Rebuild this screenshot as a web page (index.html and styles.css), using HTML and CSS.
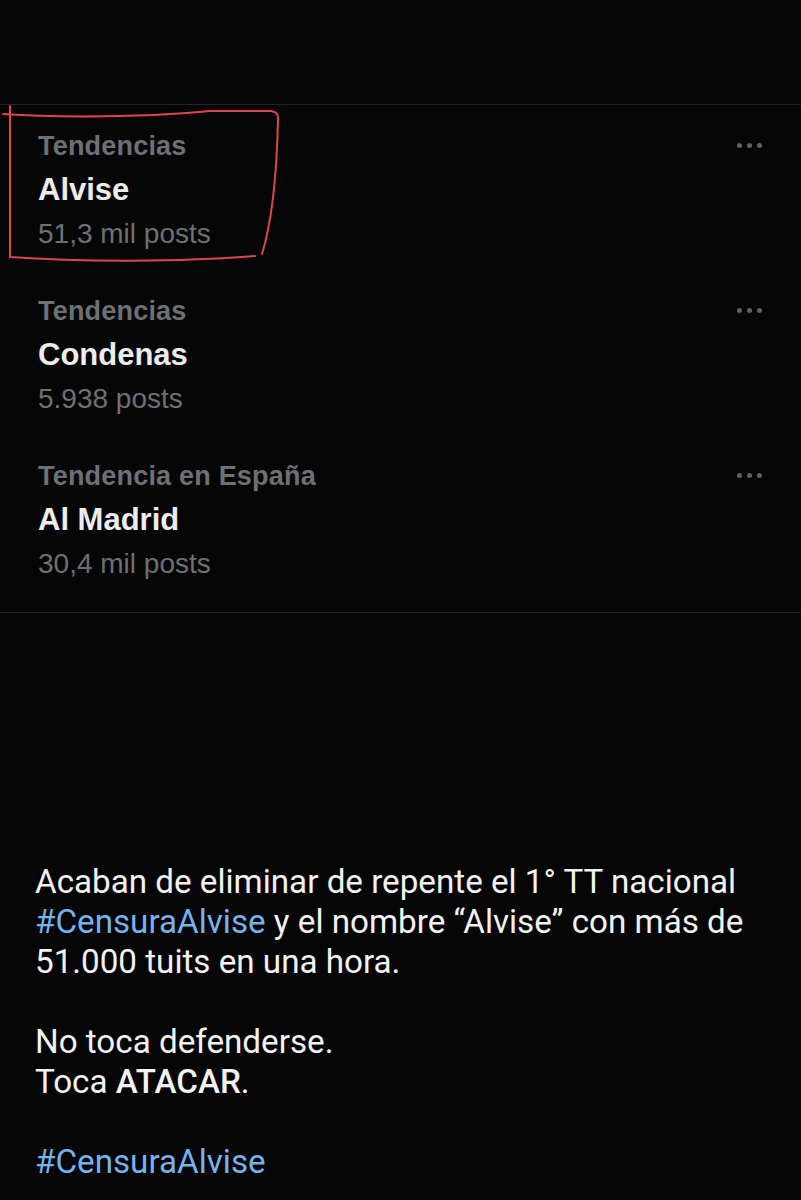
FILE: index.html
```html
<!DOCTYPE html>
<html lang="es">
<head>
<meta charset="utf-8">
<title>Tendencias</title>
<link rel="stylesheet" href="styles.css">
</head>
<body>
<div class="page">
  <div class="top-space"></div>
  <section class="trends">
    <div class="trend">
      <div class="trend-text">
        <div class="label">Tendencias</div>
        <div class="title">Alvise</div>
        <div class="count">51,3 mil posts</div>
      </div>
      <div class="more"><span></span><span></span><span></span></div>
      <svg class="mark" width="290" height="160" viewBox="0 0 290 160">
        <path d="M3 9 C 60 13, 150 12, 210 6 L 271 6 Q 279 7 278 15 C 277 60, 274 110, 262 149" />
        <path d="M10 1 L 10 152 C 80 157, 180 157, 255 151" />
      </svg>
    </div>
    <div class="trend">
      <div class="trend-text">
        <div class="label">Tendencias</div>
        <div class="title">Condenas</div>
        <div class="count">5.938 posts</div>
      </div>
      <div class="more"><span></span><span></span><span></span></div>
    </div>
    <div class="trend">
      <div class="trend-text">
        <div class="label">Tendencia en España</div>
        <div class="title">Al Madrid</div>
        <div class="count">30,4 mil posts</div>
      </div>
      <div class="more"><span></span><span></span><span></span></div>
    </div>
  </section>
  <section class="post">
    <p>Acaban de eliminar de repente el 1° TT nacional <span class="tag">#CensuraAlvise</span> y el nombre “Alvise” con más de 51.000 tuits en una hora.</p>
    <p>No toca defenderse.<br>Toca <strong>ATACAR</strong>.</p>
    <p><span class="tag">#CensuraAlvise</span></p>
  </section>
</div>
</body>
</html>
```

FILE: styles.css
```css
html, body {
  margin: 0;
  padding: 0;
  background: #060606;
}
.page {
  width: 801px;
  height: 1200px;
  overflow: hidden;
  background: #060606;
}
.top-space {
  height: 104px;
}
.trends {
  border-top: 1px solid #262626;
  border-bottom: 1px solid #262626;
  padding-bottom: 12px;
  font-family: "Liberation Sans", Arial, sans-serif;
}
.trend {
  position: relative;
  display: flex;
  justify-content: space-between;
  padding: 19px 38px 14px 38px;
}
.trend-text {
  display: flex;
  flex-direction: column;
}
.label {
  color: #6d7074;
  font-weight: 700;
  font-size: 27px;
  line-height: 44px;
  letter-spacing: 0.2px;
}
.title {
  color: #ececec;
  font-weight: 700;
  font-size: 31px;
  line-height: 44px;
}
.count {
  color: #6d7074;
  font-size: 28px;
  line-height: 44px;
}
.more {
  display: flex;
  gap: 5px;
  margin-top: 19px;
  margin-right: 1px;
  height: 5px;
}
.more span {
  width: 5px;
  height: 5px;
  border-radius: 50%;
  background: #5e6165;
}
.mark {
  position: absolute;
  left: 0;
  top: 0;
  fill: none;
  stroke: #e0444e;
  stroke-width: 2;
  stroke-linecap: round;
}
.post {
  padding: 249px 30px 0 35px;
  font-family: Roboto, "Noto Sans", sans-serif;
  font-size: 33.2px;
  line-height: 40px;
  color: #f2f2f2;
}
.post p {
  margin: 0 0 40px 0;
}
.post strong {
  font-weight: 500;
}
.tag {
  color: #74b3ec;
}
```
